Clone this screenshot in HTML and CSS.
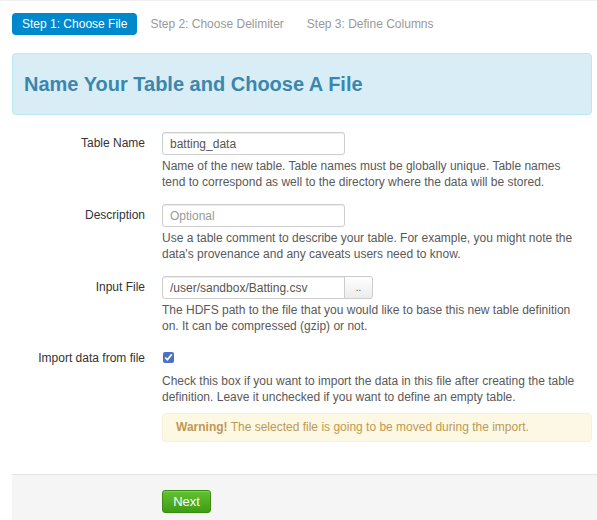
FILE: index.html
```html
<!DOCTYPE html>
<html>
<head>
<meta charset="utf-8">
<link rel="stylesheet" href="styles.css">
</head>
<body>
<div class="page">
  <ul class="steps">
    <li class="step active">Step 1: Choose File</li>
    <li class="step">Step 2: Choose Delimiter</li>
    <li class="step">Step 3: Define Columns</li>
  </ul>
  <div class="hero">
    <h1>Name Your Table and Choose A File</h1>
  </div>
  <form class="form">
    <div class="row">
      <label class="label">Table Name</label>
      <div class="controls">
        <input class="input" type="text" value="batting_data">
        <p class="help">Name of the new table. Table names must be globally unique. Table names tend to correspond as well to the directory where the data will be stored.</p>
      </div>
    </div>
    <div class="row">
      <label class="label">Description</label>
      <div class="controls">
        <input class="input" type="text" placeholder="Optional">
        <p class="help">Use a table comment to describe your table. For example, you might note the data's provenance and any caveats users need to know.</p>
      </div>
    </div>
    <div class="row">
      <label class="label">Input File</label>
      <div class="controls">
        <div class="append"><input class="input input-append" type="text" value="/user/sandbox/Batting.csv"><button type="button" class="addon">..</button></div>
        <p class="help">The HDFS path to the file that you would like to base this new table definition on. It can be compressed (gzip) or not.</p>
      </div>
    </div>
    <div class="row row-last">
      <label class="label label-check">Import data from file</label>
      <div class="controls">
        <input class="check" type="checkbox" checked>
        <p class="help help-check">Check this box if you want to import the data in this file after creating the table definition. Leave it unchecked if you want to define an empty table.</p>
        <div class="warning"><strong>Warning!</strong> The selected file is going to be moved during the import.</div>
      </div>
    </div>
  </form>
  <div class="footer">
    <button type="button" class="next">Next</button>
  </div>
</div>
</body>
</html>
```

FILE: styles.css
```css
html, body {
  margin: 0;
  padding: 0;
  background: #fff;
}
body {
  font-family: "Liberation Sans", Arial, sans-serif;
  font-size: 12px;
  color: #333;
  border-top: 1px solid #f0f0f0;
}
.page {
  padding-left: 12px;
}
.steps {
  list-style: none;
  margin: 0;
  padding: 12px 0 0 0;
  display: flex;
  gap: 3px;
  height: 52px;
  box-sizing: border-box;
}
.step {
  font-size: 12px;
  line-height: 22px;
  height: 22px;
  padding: 0 10px;
  color: #999;
  border-radius: 4px;
}
.step.active {
  background: #0088cc;
  color: #fff;
}
.hero {
  margin-right: 5px;
  background: #d9edf7;
  border: 1px solid #bce8f1;
  border-radius: 4px;
  height: 62px;
  box-sizing: border-box;
  display: flex;
  align-items: center;
  padding-left: 11px;
}
.hero h1 {
  margin: 0;
  font-size: 20px;
  font-weight: bold;
  color: #3a87ad;
}
.form {
  padding-top: 17px;
  padding-bottom: 32px;
  margin-right: 5px;
}
.row {
  display: grid;
  grid-template-columns: 133px 1fr;
  column-gap: 17px;
  margin-bottom: 14px;
}
.row-last {
  margin-bottom: 0;
}
.label {
  text-align: right;
  font-size: 12px;
  line-height: 23px;
  color: #333;
}
.input {
  width: 183px;
  height: 23px;
  box-sizing: border-box;
  border: 1px solid #ccc;
  border-radius: 3px;
  padding: 2px 7px;
  font-family: "Liberation Sans", Arial, sans-serif;
  font-size: 12px;
  color: #555;
  box-shadow: inset 0 1px 1px rgba(0,0,0,0.075);
  margin: 0;
  display: block;
}
.input::placeholder {
  color: #999;
}
.append {
  display: flex;
}
.input-append {
  border-radius: 3px 0 0 3px;
}
.addon {
  width: 29px;
  height: 23px;
  margin: 0 0 0 -1px;
  border: 1px solid #ccc;
  border-radius: 0 3px 3px 0;
  background: linear-gradient(#ffffff, #ececec);
  color: #555;
  font-size: 10px;
  padding: 0;
  font-family: "Liberation Sans", Arial, sans-serif;
}
.help {
  margin: 3px 0 0 0;
  max-width: 415px;
  line-height: 16px;
  color: #595959;
  font-size: 12px;
}
.label-check {
  line-height: 16px;
  padding-top: 2px;
}
.check {
  margin: 4px 0 0 1px;
  width: 11px;
  height: 11px;
  accent-color: #4a72c4;
  display: block;
}
.help-check {
  margin-top: 10px;
}
.warning {
  margin-top: 8px;
  background: #fcf8e3;
  border: 1px solid #fbeed5;
  border-radius: 4px;
  color: #c09853;
  padding: 6px 13px;
  line-height: 15px;
  font-size: 12px;
}
.footer {
  background: #f5f5f5;
  border-top: 1px solid #e5e5e5;
  padding: 15px 0 0 150px;
  height: 46px;
  box-sizing: border-box;
}
.next {
  height: 23px;
  width: 49px;
  border: 1px solid #3b8d12;
  border-radius: 3px;
  background: linear-gradient(#62c232, #3f9c15);
  color: #fff;
  font-family: "Liberation Sans", Arial, sans-serif;
  font-size: 13px;
  padding: 0;
  box-shadow: inset 0 1px 0 rgba(255,255,255,0.2);
}
```
